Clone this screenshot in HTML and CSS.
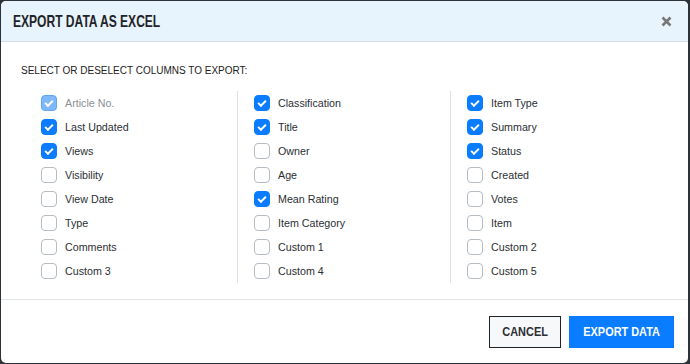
FILE: index.html
```html
<!DOCTYPE html>
<html lang="en">
<head>
    <meta charset="UTF-8">
    <meta name="viewport" content="width=device-width, initial-scale=1.0">
    <title>Export Data as Excel</title>
    <link rel="stylesheet" href="styles.css">
</head>
<body>

<div class="modal">
    <div class="modal-header">
        <h2><span class="narrow">EXPORT DATA AS EXCEL</span></h2>
        <button type="button" class="close-button" aria-label="Close">
            <svg width="11" height="11" viewBox="0 0 11 11">
                <path d="M1.5 1.5 L9.5 9.5 M9.5 1.5 L1.5 9.5" stroke="#777" stroke-width="2.6" stroke-linecap="butt"/>
            </svg>
        </button>
    </div>

    <div class="modal-body">
        <p class="intro">SELECT OR DESELECT COLUMNS TO EXPORT:</p>

        <div class="columns">
            <div class="column">
                <label class="check disabled"><input type="checkbox" checked disabled><span class="box"></span>Article No.</label>
                <label class="check"><input type="checkbox" checked><span class="box"></span>Last Updated</label>
                <label class="check"><input type="checkbox" checked><span class="box"></span>Views</label>
                <label class="check"><input type="checkbox"><span class="box"></span>Visibility</label>
                <label class="check"><input type="checkbox"><span class="box"></span>View Date</label>
                <label class="check"><input type="checkbox"><span class="box"></span>Type</label>
                <label class="check"><input type="checkbox"><span class="box"></span>Comments</label>
                <label class="check"><input type="checkbox"><span class="box"></span>Custom 3</label>
            </div>
            <div class="column">
                <label class="check"><input type="checkbox" checked><span class="box"></span>Classification</label>
                <label class="check"><input type="checkbox" checked><span class="box"></span>Title</label>
                <label class="check"><input type="checkbox"><span class="box"></span>Owner</label>
                <label class="check"><input type="checkbox"><span class="box"></span>Age</label>
                <label class="check"><input type="checkbox" checked><span class="box"></span>Mean Rating</label>
                <label class="check"><input type="checkbox"><span class="box"></span>Item Category</label>
                <label class="check"><input type="checkbox"><span class="box"></span>Custom 1</label>
                <label class="check"><input type="checkbox"><span class="box"></span>Custom 4</label>
            </div>
            <div class="column">
                <label class="check"><input type="checkbox" checked><span class="box"></span>Item Type</label>
                <label class="check"><input type="checkbox" checked><span class="box"></span>Summary</label>
                <label class="check"><input type="checkbox" checked><span class="box"></span>Status</label>
                <label class="check"><input type="checkbox"><span class="box"></span>Created</label>
                <label class="check"><input type="checkbox"><span class="box"></span>Votes</label>
                <label class="check"><input type="checkbox"><span class="box"></span>Item</label>
                <label class="check"><input type="checkbox"><span class="box"></span>Custom 2</label>
                <label class="check"><input type="checkbox"><span class="box"></span>Custom 5</label>
            </div>
        </div>
    </div>

    <div class="modal-footer">
        <button type="button" class="btn btn-cancel"><span class="narrow">CANCEL</span></button>
        <button type="button" class="btn btn-export"><span class="narrow">EXPORT DATA</span></button>
    </div>
</div>

</body>
</html>
```

FILE: styles.css
```css
body {
    margin: 0;
    padding: 1px 2px 1px 1px;
    background-color: #2c3338;
    font-family: "Liberation Sans", Arial, sans-serif;
    color: #333;
}

.modal {
    height: 362px;
    box-sizing: border-box;
    background-color: white;
    border-radius: 5px;
    overflow: hidden;
    display: flex;
    flex-direction: column;
}

/* condensed look of the headings and buttons */
.narrow {
    display: inline-block;
    white-space: nowrap;
    transform-origin: left center;
}

.modal-header {
    height: 41px;
    box-sizing: border-box;
    display: flex;
    justify-content: space-between;
    align-items: center;
    padding: 0 16px 0 12px;
    background-color: #e8f4fd;
    border-bottom: 1px solid #d3dde6;
}

.modal-header h2 {
    margin: 0;
    width: 150px;
    font-size: 16.5px;
    font-weight: bold;
    color: #1f2328;
}

.modal-header h2 .narrow {
    transform: scaleX(0.73);
}

.close-button {
    border: none;
    background: none;
    padding: 0;
    display: flex;
    cursor: pointer;
}

.modal-body {
    flex: 1;
    padding: 0 24px 0 20px;
}

.intro {
    margin: 23px 0 15px;
    font-size: 10px;
    color: #222;
}

.columns {
    display: grid;
    grid-template-columns: repeat(3, 213px);
    margin-left: 3px;
}

.column {
    padding-left: 16px;
    border-left: 1px solid #dde1e5;
}

.column:first-child {
    border-left-color: transparent;
}

.check {
    display: flex;
    align-items: center;
    height: 24px;
    font-size: 10.7px;
    color: #2b2f33;
    cursor: pointer;
}

.check input {
    display: none;
}

.box {
    width: 16px;
    height: 16px;
    box-sizing: border-box;
    margin-right: 8px;
    border: 1px solid #b4bcc4;
    border-radius: 4px;
    background-color: white;
    display: flex;
    align-items: center;
    justify-content: center;
}

.check input:checked + .box {
    background-color: #0a7cff;
    border-color: #0a7cff;
}

.check input:checked + .box::after {
    content: "";
    width: 6px;
    height: 3px;
    border-left: 2px solid white;
    border-bottom: 2px solid white;
    transform: translateY(-1px) rotate(-45deg);
}

.check.disabled {
    color: #8a8f95;
}

.check.disabled input:checked + .box {
    background-color: #7fb9fb;
    border-color: #5ea6f8;
}

.modal-footer {
    height: 64px;
    box-sizing: border-box;
    display: flex;
    justify-content: flex-end;
    align-items: center;
    gap: 8px;
    padding: 0 14px;
    border-top: 1px solid #e3e6e9;
}

.btn {
    height: 32px;
    padding: 0;
    font-family: "Liberation Sans", Arial, sans-serif;
    font-size: 13px;
    font-weight: bold;
    cursor: pointer;
    display: flex;
    align-items: center;
    justify-content: center;
}

.btn .narrow {
    transform-origin: center;
    transform: scaleX(0.84);
}

.btn-cancel {
    width: 72px;
    border: 1px solid #1f2328;
    background-color: #f7f8fa;
    color: #2a2e33;
}

.btn-export {
    width: 105px;
    border: none;
    background-color: #0a7cff;
    color: white;
}
```
